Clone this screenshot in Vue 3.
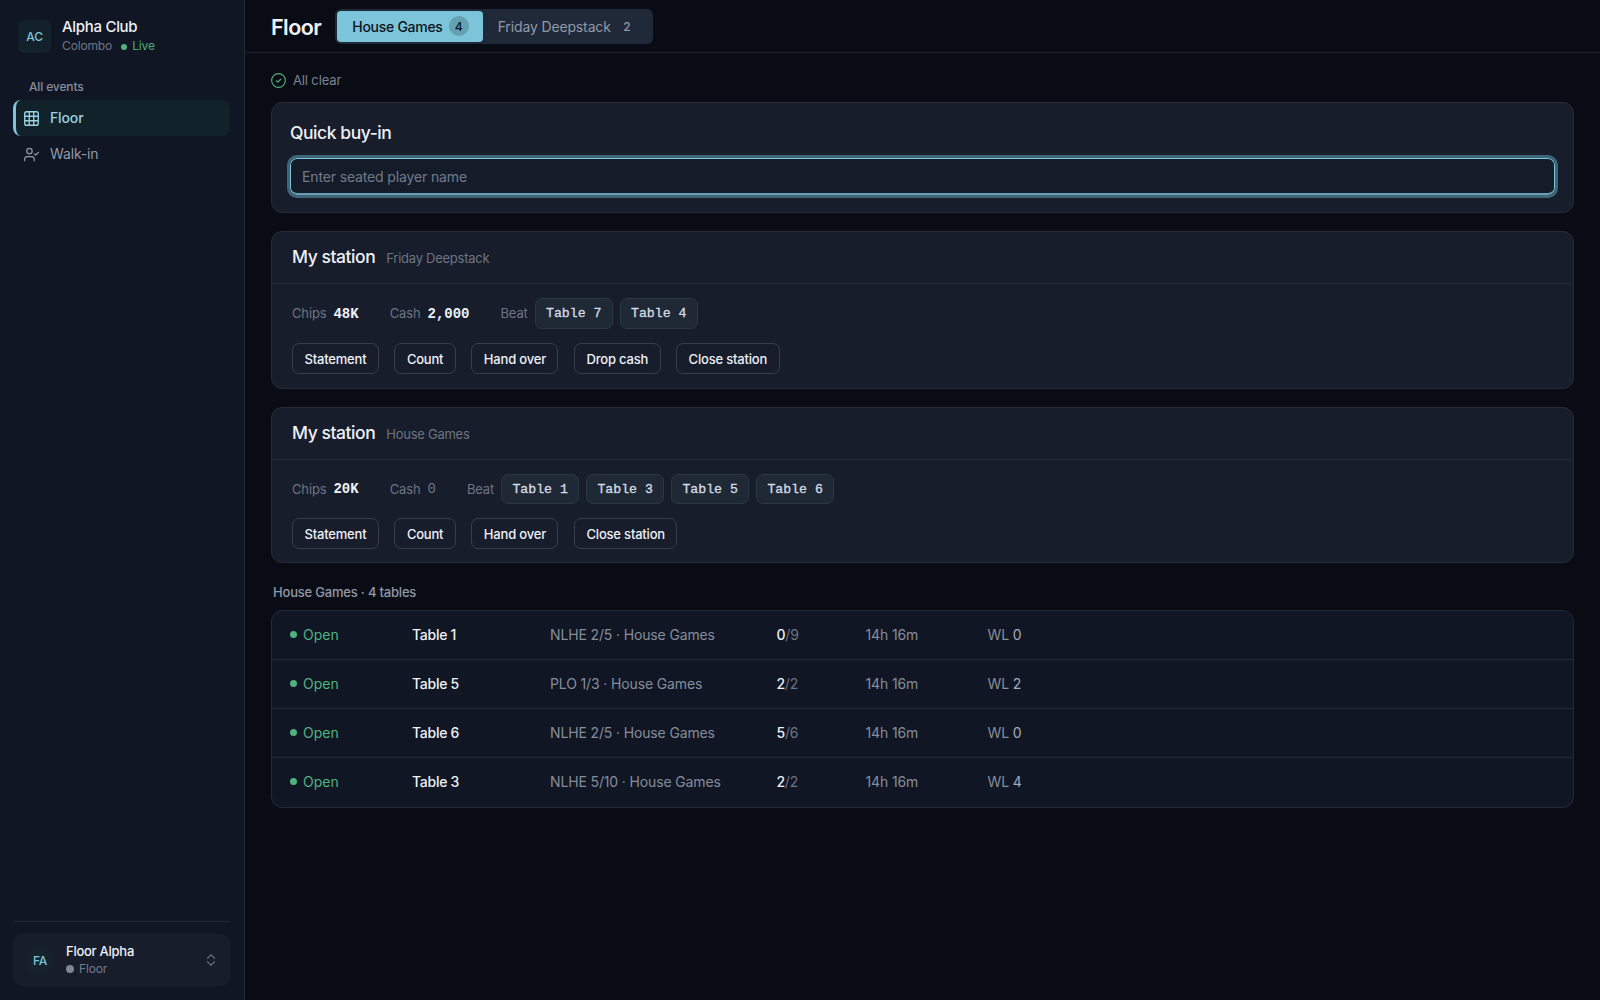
<template>
  <div class="app">
    <aside class="sidebar">
      <div class="club">
        <span class="club__logo">AC</span>
        <div class="club__info">
          <p class="club__name">Alpha Club</p>
          <p class="club__meta">
            <span>Colombo</span>
            <span class="club__live">Live</span>
          </p>
        </div>
      </div>
      <nav class="nav">
        <p class="nav__title">All events</p>
        <a class="nav__item nav__item--active">
          <svg class="nav__icon" viewBox="2 2 20 20">
            <rect x="3" y="3" width="18" height="18" rx="2.5" />
            <path d="M3 9h18M3 15h18M9 3v18M15 3v18" />
          </svg>
          <span>Floor</span>
        </a>
        <a class="nav__item">
          <svg class="nav__icon" viewBox="1 2 22 20">
            <path d="M2 21v-2a4 4 0 0 1 4-4h6a4 4 0 0 1 4 4v2" />
            <circle cx="9" cy="7" r="4" />
            <path d="M16 11l2 2 4-4" />
          </svg>
          <span>Walk-in</span>
        </a>
      </nav>
      <div class="sidebar__bottom">
        <button class="user">
          <span class="user__avatar">FA</span>
          <span class="user__info">
            <span class="user__name">Floor Alpha</span>
            <span class="user__role">Floor</span>
          </span>
          <svg class="user__chevron" viewBox="0 0 24 24">
            <path d="M6 9l6-6 6 6M6 15l6 6 6-6" />
          </svg>
        </button>
      </div>
    </aside>

    <div class="page">
      <header class="header">
        <h1 class="header__title">Floor</h1>
        <div class="tabs">
          <button
            v-for="{ name, count } in events"
            :key="name"
            :class="['tab', { 'tab--active': name === activeEvent }]"
            @click="activeEvent = name"
          >
            <span>{{ name }}</span>
            <span class="tab__count">{{ count }}</span>
          </button>
        </div>
      </header>

      <main class="main">
        <p class="status">
          <svg class="status__icon" viewBox="0 0 24 24">
            <circle cx="12" cy="12" r="11" />
            <path d="M8.5 12.2l2.5 2.3 4.500-4.500" />
          </svg>
          <span>All clear</span>
        </p>

        <section class="card buyin">
          <h2 class="card__title">Quick buy-in</h2>
          <input class="buyin__input" type="text" placeholder="Enter seated player name" />
        </section>

        <section v-for="station in stations" :key="station.event" class="card station">
          <div class="station__head">
            <h2 class="card__title">My station</h2>
            <span class="station__event">{{ station.event }}</span>
          </div>
          <div class="station__body">
            <div class="station__stats">
              <p class="stat"><span>Chips</span> <b class="stat__value">{{ station.chips }}</b></p>
              <p class="stat">
                <span>Cash</span>
                <b :class="['stat__value', { 'stat__value--empty': station.cash === '0' }]">{{ station.cash }}</b>
              </p>
              <div class="stat">
                <span>Beat</span>
                <b v-for="table in station.beat" :key="table" class="chip">Table {{ table }}</b>
              </div>
            </div>
            <div class="station__actions">
              <button v-for="action in station.actions" :key="action" class="button">{{ action }}</button>
            </div>
          </div>
        </section>

        <h3 class="tables__title">House Games · 4 tables</h3>
        <section class="tables">
          <div v-for="row in tables" :key="row.name" class="row">
            <span class="row__state">Open</span>
            <span class="row__name">{{ row.name }}</span>
            <span>{{ row.game }} · House Games</span>
            <span class="row__seats"><b>{{ row.taken }}</b>/{{ row.seats }}</span>
            <span class="row__time">14h 16m</span>
            <span class="row__time">WL <span class="row__waiting">{{ row.waiting }}</span></span>
          </div>
        </section>
      </main>
    </div>
  </div>
</template>

<script setup>
import { ref } from "vue";

const activeEvent = ref("House Games");
const events = [
  { name: "House Games", count: 4 },
  { name: "Friday Deepstack", count: 2 }
];
const stations = [
  {
    event: "Friday Deepstack",
    chips: "48K",
    cash: "2,000",
    beat: [7, 4],
    actions: ["Statement", "Count", "Hand over", "Drop cash", "Close station"]
  },
  {
    event: "House Games",
    chips: "20K",
    cash: "0",
    beat: [1, 3, 5, 6],
    actions: ["Statement", "Count", "Hand over", "Close station"]
  }
];
const tables = [
  { name: "Table 1", game: "NLHE 2/5", taken: 0, seats: 9, waiting: 0 },
  { name: "Table 5", game: "PLO 1/3", taken: 2, seats: 2, waiting: 2 },
  { name: "Table 6", game: "NLHE 2/5", taken: 5, seats: 6, waiting: 0 },
  { name: "Table 3", game: "NLHE 5/10", taken: 2, seats: 2, waiting: 4 }
];
</script>

<style>
body {
    margin: 0;
    background-color: #090c14;
}
</style>

<style scoped>
.app {
    display: flex;
    height: 100vh;
    overflow: hidden;
    background-color: #090c14;
    color: #eef1f7;
    font-family: Inter, "Liberation Sans", sans-serif;
    font-size: 14px;
    letter-spacing: -0.01em;
}
.app * {
    box-sizing: border-box;
}
p, h1, h2, h3 {
    margin: 0;
}
button {
    font: inherit;
    letter-spacing: inherit;
    color: inherit;
    background: none;
    border: none;
    padding: 0;
}
svg {
    fill: none;
    stroke: currentColor;
    stroke-width: 1.8;
    stroke-linecap: round;
    stroke-linejoin: round;
    flex-shrink: 0;
}
.sidebar {
    display: flex;
    flex-direction: column;
    flex-shrink: 0;
    width: 245px;
    padding: 18px 14px 14px 13px;
    background-color: #101623;
    border-right: 1px solid #232b37;
}
.club {
    display: flex;
    gap: 11px;
    padding-left: 5px;
    height: 60px;
}
.club__logo {
    display: grid;
    place-items: center;
    width: 33px;
    height: 33px;
    margin-top: 2px;
    border-radius: 6px;
    background-color: #12212a;
    color: #7cc4da;
    font-size: 12px;
    font-weight: 500;
}
.club__name {
    font-size: 15px;
    font-weight: 550;
    letter-spacing: -0.02em;
    line-height: 18px;
}
.club__meta {
    display: flex;
    gap: 9px;
    font-size: 12px;
    line-height: 20px;
    color: #6f7786;
}
.club__live {
    display: flex;
    align-items: center;
    gap: 5px;
    color: #4caf7c;
}
.club__live::before {
    content: "";
    width: 6px;
    height: 6px;
    margin-top: 2px;
    border-radius: 50%;
    background-color: #4fb27f;
}
.nav {
    display: flex;
    flex-direction: column;
}
.nav__title {
    height: 22px;
    padding-left: 16px;
    font-size: 12px;
    font-weight: 500;
    line-height: 18px;
    color: #868e9c;
}
.nav__item {
    display: flex;
    align-items: center;
    gap: 11px;
    height: 36px;
    padding-left: 8px;
    border-left: 3px solid transparent;
    border-radius: 8px;
    color: #9199a7;
}
.nav__item span {
    padding-bottom: 2px;
}
.nav__item--active {
    background-color: #12222a;
    border-left-color: #7cc4da;
    color: #9bd3e2;
    font-weight: 550;
}
.nav__icon {
    width: 15px;
    height: 15px;
}
.sidebar__bottom {
    margin-top: auto;
    padding-top: 12px;
    border-top: 1px solid #232a37;
}
.user {
    display: flex;
    align-items: center;
    width: 100%;
    height: 52px;
    padding: 0 11px 0 9px;
    border: 1px solid #181f2d;
    border-radius: 9px;
    background-color: #171d2b;
    text-align: left;
}
.user__avatar {
    display: grid;
    place-items: center;
    width: 34px;
    height: 34px;
    margin-right: 9px;
    border-radius: 50%;
    background: radial-gradient(closest-side, #122a2e, #171d2b);
    color: #7cc4da;
    font-size: 12px;
    font-weight: 500;
}
.user__info {
    display: flex;
    flex-direction: column;
    flex-grow: 1;
}
.user__name {
    font-size: 13px;
    font-weight: 550;
    letter-spacing: -0.02em;
    line-height: 18px;
}
.user__role {
    display: flex;
    align-items: center;
    gap: 5px;
    font-size: 12px;
    line-height: 18px;
    color: #727a89;
}
.user__role::before {
    content: "";
    width: 8px;
    height: 8px;
    border-radius: 50%;
    background-color: #7f8695;
}
.user__chevron {
    width: 14px;
    height: 14px;
    color: #868e9c;
}
.page {
    flex-grow: 1;
    min-width: 0;
}
.header {
    display: flex;
    align-items: center;
    gap: 14px;
    height: 53px;
    padding-left: 26px;
    border-bottom: 1px solid #1d232f;
}
.header__title {
    padding-top: 1px;
    font-size: 21.5px;
    font-weight: 600;
    letter-spacing: -0.025em;
}
.tabs {
    display: flex;
    height: 35px;
    padding: 2px;
    border-radius: 6px;
    background-color: #202937;
}
.tab {
    display: flex;
    align-items: center;
    gap: 6px;
    height: 31px;
    padding: 0 14px 0 15px;
    border-radius: 4px;
    color: #9199a7;
}
.tab--active {
    background-color: #7cc4da;
    color: #0b1420;
    font-weight: 550;
    letter-spacing: -0.02em;
}
.tab__count {
    display: grid;
    place-items: center;
    width: 20px;
    height: 20px;
    border-radius: 50%;
    font-size: 12px;
    font-weight: 500;
}
.tab--active .tab__count {
    background-color: #65a0b3;
}
.main {
    padding: 18px 26px 0;
}
.status {
    display: flex;
    align-items: center;
    gap: 7px;
    height: 18px;
    margin-bottom: 13px;
    font-size: 13px;
    color: #7b8392;
}
.status__icon {
    width: 15px;
    height: 15px;
    color: #4fb27f;
}
.card {
    margin-bottom: 18px;
    background-color: #171d2b;
    border: 1px solid #252b38;
    border-radius: 11px;
}
.card__title {
    font-size: 17.5px;
    font-weight: 550;
    letter-spacing: -0.025em;
    line-height: 22px;
}
.buyin {
    height: 111px;
    padding: 19px 18px;
}
.buyin__input {
    display: block;
    width: 100%;
    height: 37px;
    margin-top: 14px;
    padding: 1px 11px 0;
    border: 1px solid #7cc4da;
    border-bottom: 2px solid #6a9fb3;
    border-radius: 7px;
    outline: 3px solid #3d6678;
    outline-offset: 0;
    background-color: #141c2a;
    font: inherit;
    letter-spacing: inherit;
    color: inherit;
}
.buyin__input::placeholder {
    color: #727a89;
    opacity: 1;
}
.station__head {
    display: flex;
    align-items: baseline;
    gap: 11px;
    height: 52px;
    padding: 14px 20px 0;
    border-bottom: 1px solid #252b38;
}
.station__event {
    font-size: 13px;
    letter-spacing: -0.02em;
    color: #6c7483;
}
.station__body {
    padding: 14px 20px;
}
.station__stats {
    display: flex;
    gap: 31px;
    height: 31px;
    margin-bottom: 14px;
}
.station + .station .station__body {
    padding-bottom: 13px;
}
.station + .station .station__stats {
    height: 30px;
}
.stat {
    display: flex;
    align-items: center;
    gap: 7px;
    font-size: 13px;
    color: #6c7483;
}
.stat span {
    padding-bottom: 1px;
}
.stat__value {
    font-family: "Liberation Mono", monospace;
    font-size: 14px;
    letter-spacing: 0;
    color: #eef1f7;
}
.stat__value--empty {
    font-weight: 400;
    color: #6c7483;
}
.chip {
    display: grid;
    place-items: center;
    width: 78px;
    height: 100%;
    border: 1px solid #2c3744;
    border-radius: 7px;
    background-color: #1f2936;
    color: #d6dce6;
    font-family: "Liberation Mono", monospace;
    font-size: 13.2px;
    font-weight: 400;
    letter-spacing: 0;
    -webkit-text-stroke: 0.3px currentColor;
}
.station__actions {
    display: flex;
    gap: 15.5px;
}
.button {
    height: 31px;
    padding: 0 11.5px;
    border: 1px solid #343d4b;
    border-radius: 7px;
    font-size: 13px;
    font-weight: 500;
    letter-spacing: -0.015em;
}
.tables__title {
    height: 29px;
    padding-left: 2px;
    font-size: 13px;
    font-weight: 500;
    letter-spacing: -0.015em;
    line-height: 22px;
    color: #9199a7;
}
.tables {
    border: 1px solid #232a37;
    border-radius: 11px;
    background-color: #101623;
}
.row {
    display: grid;
    grid-template-columns: 122px 138px 226px 89px 122px 1fr;
    align-items: center;
    height: 49px;
    padding: 0 0 1px 18px;
    color: #858d9b;
}
.row:first-child {
    height: 48px;
}
.row:last-child {
    height: 50px;
    padding-bottom: 2px;
}
.row + .row {
    border-top: 1px solid #232a37;
}
.row__state {
    display: flex;
    align-items: center;
    gap: 6px;
    letter-spacing: 0;
    color: #4fb27f;
}
.row__state::before {
    content: "";
    width: 7px;
    height: 7px;
    border-radius: 50%;
    background-color: currentColor;
}
.row__name, .row b {
    font-weight: 550;
    letter-spacing: -0.02em;
    color: #eef1f7;
}
.row__seats, .row__time {
    padding-left: 0.5px;
}
.row__seats {
    color: #6c7483;
}
.row__waiting {
    color: #a3abb8;
}
</style>
